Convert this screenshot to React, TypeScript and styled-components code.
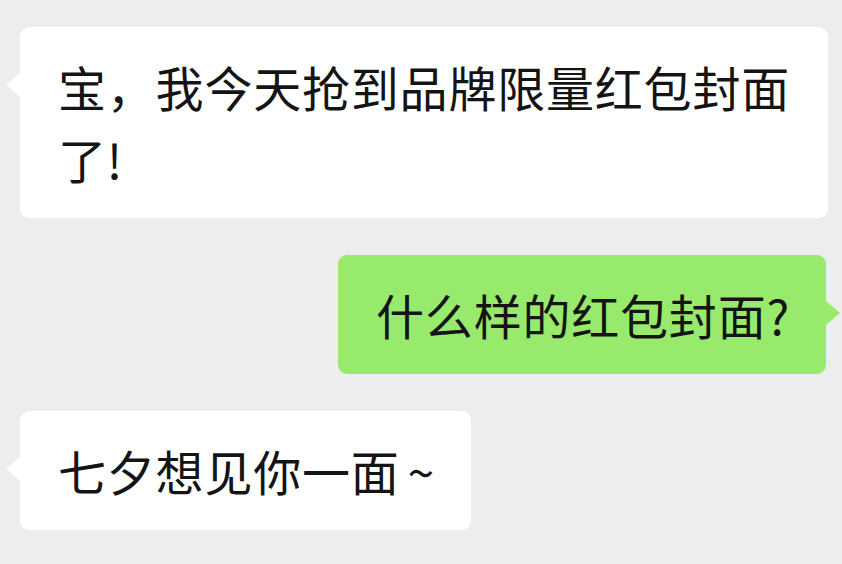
import React from "react";
import styled, { createGlobalStyle, css } from "styled-components";

const GlobalStyle = createGlobalStyle`
  html, body {
    margin: 0;
    padding: 0;
    background: #ededed;
  }
  body {
    font-family: "Noto Sans CJK SC", "Noto Sans", sans-serif;
  }
`;

const Chat = styled.div`
  width: 842px;
  height: 564px;
  box-sizing: border-box;
  padding: 27px 14px 0 20px;
  display: flex;
  flex-direction: column;
  gap: 37px;
  background: #ededed;
  overflow: hidden;
`;

const Row = styled.div<{ $mine?: boolean }>`
  display: flex;
  justify-content: ${(p) => (p.$mine ? "flex-end" : "flex-start")};
  padding-right: ${(p) => (p.$mine ? "2px" : "0")};
`;

const Bubble = styled.div<{ $mine?: boolean }>`
  position: relative;
  box-sizing: border-box;
  max-width: 808px;
  padding: 23px 36px 24px 38px;
  border-radius: 9px;
  background: ${(p) => (p.$mine ? "#98ea6c" : "#ffffff")};
  color: #141414;
  font-size: 48px;
  line-height: 72px;
  letter-spacing: 0.8px;
  font-weight: 400;

  &::before {
    content: "";
    position: absolute;
    top: 46px;
    width: 14px;
    height: 24px;
    background: inherit;
    ${(p) =>
      p.$mine
        ? css`
            right: -14px;
            clip-path: polygon(0 0, 100% 50%, 0 100%);
          `
        : css`
            left: -14px;
            clip-path: polygon(100% 0, 0 50%, 100% 100%);
          `}
  }
`;

const Tilde = styled.span`
  margin-left: 8px;
`;

export default function App() {
  return (
    <>
      <GlobalStyle />
      <Chat>
        <Row>
          <Bubble>宝，我今天抢到品牌限量红包封面了!</Bubble>
        </Row>
        <Row $mine>
          <Bubble $mine>什么样的红包封面?</Bubble>
        </Row>
        <Row>
          <Bubble>
            七夕想见你一面<Tilde>~</Tilde>
          </Bubble>
        </Row>
      </Chat>
    </>
  );
}
